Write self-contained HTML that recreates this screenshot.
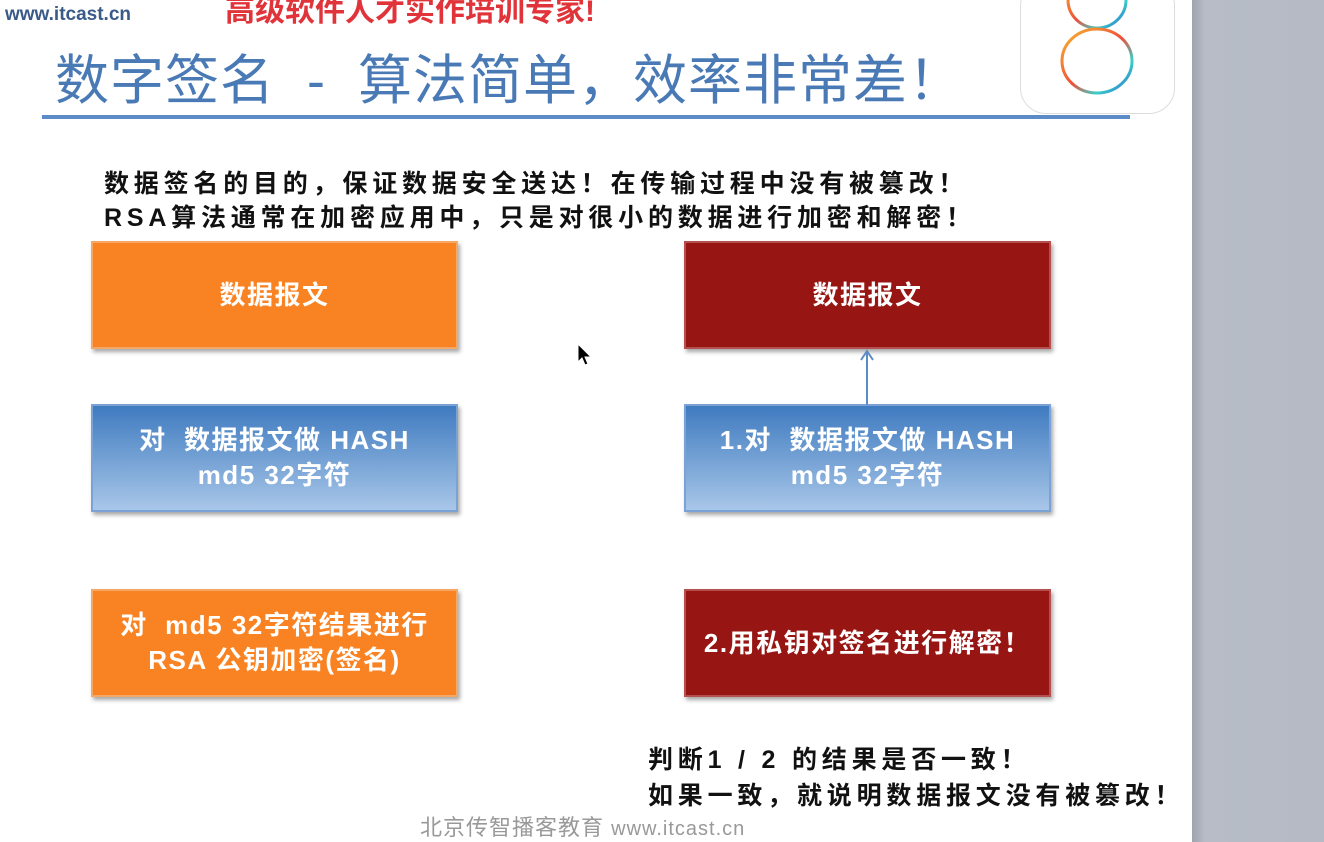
<html><head><style>
body{margin:0;width:1324px;height:842px;background:#fff;position:relative;overflow:hidden;font-family:"Liberation Sans","Noto Sans CJK SC",sans-serif}
.b{position:absolute;box-sizing:border-box;width:367px;height:108px;display:flex;align-items:center;justify-content:center;text-align:center;color:#fff;font-size:26px;letter-spacing:1.5px;font-weight:bold;line-height:35px;box-shadow:2px 3px 4px rgba(0,0,0,.35)}
.o{background:#f98323;border:2px solid #f5a765}
.r{background:#971512;border:2px solid #b55050}
.bl{background:linear-gradient(#3f7bc0,#a8c6e8);border:2px solid #7aa2d4}
.t{position:absolute;font-size:25px;font-weight:bold;color:#111;letter-spacing:4.8px}
</style></head><body>
<div style="position:absolute;left:1192px;top:0;width:132px;height:842px;background:linear-gradient(90deg,#9ea4ad,#b7bcc6 10%,#b5bac4)"></div>
<div style="position:absolute;left:5px;top:4px;font-size:19px;font-weight:bold;color:#3a5a88">www.itcast.cn</div>
<div style="position:absolute;left:225px;top:-14px;font-size:30px;font-weight:bold;color:#e0343a">高级软件人才实作培训专家!</div>
<div style="position:absolute;left:55px;top:36px;font-size:54px;color:#4a7ab5;letter-spacing:1px">数字签名 &nbsp;- &nbsp;算法简单，效率非常差！</div>
<div style="position:absolute;left:42px;top:115px;width:1088px;height:4px;background:#5b8cc8"></div>
<div style="position:absolute;left:1020px;top:-20px;width:153px;height:132px;border:1px solid #ddd;border-radius:26px;background:#fff"></div>
<svg style="position:absolute;left:1055px;top:0" width="85" height="100"><defs><linearGradient id="g" x1="0" y1="0" x2="1" y2="1"><stop offset="0" stop-color="#f8b82d"/><stop offset=".5" stop-color="#f04f3a"/><stop offset=".75" stop-color="#39d0c8"/><stop offset="1" stop-color="#2c5fd8"/></linearGradient></defs><ellipse cx="42" cy="0" rx="29" ry="28" fill="none" stroke="url(#g)" stroke-width="3"/><ellipse cx="42" cy="61" rx="35" ry="32" fill="none" stroke="url(#g)" stroke-width="3"/></svg>
<div class="t" style="left:104px;top:164px">数据签名的目的，保证数据安全送达！在传输过程中没有被篡改！</div>
<div class="t" style="left:104px;top:198px">RSA算法通常在加密应用中，只是对很小的数据进行加密和解密！</div>
<div class="b o" style="left:91px;top:241px">数据报文</div>
<div class="b bl" style="left:91px;top:404px">对 &nbsp;数据报文做 HASH<br>md5 32字符</div>
<div class="b o" style="left:91px;top:589px">对 &nbsp;md5 32字符结果进行<br>RSA 公钥加密(签名)</div>
<div class="b r" style="left:684px;top:241px">数据报文</div>
<div class="b bl" style="left:684px;top:404px">1.对 &nbsp;数据报文做 HASH<br>md5 32字符</div>
<div class="b r" style="left:684px;top:589px">2.用私钥对签名进行解密！</div>
<svg style="position:absolute;left:858px;top:348px" width="20" height="58"><path d="M9 57V4M3 12L9 3L15 12" fill="none" stroke="#5b8cc8" stroke-width="2"/></svg>
<svg style="position:absolute;left:576px;top:342px" width="16" height="26"><path d="M2 2V20L6 16L9 23L12 22L9 15H15Z" fill="#000" stroke="#fff"/></svg>
<div class="t" style="left:648px;top:740px">判断1 / 2 的结果是否一致！</div>
<div class="t" style="left:648px;top:776px">如果一致，就说明数据报文没有被篡改！</div>
<div style="position:absolute;left:420px;top:810px;font-size:22px;color:#999;letter-spacing:1px">北京传智播客教育 <span style="font-size:20px">www.itcast.cn</span></div>
</body></html>
